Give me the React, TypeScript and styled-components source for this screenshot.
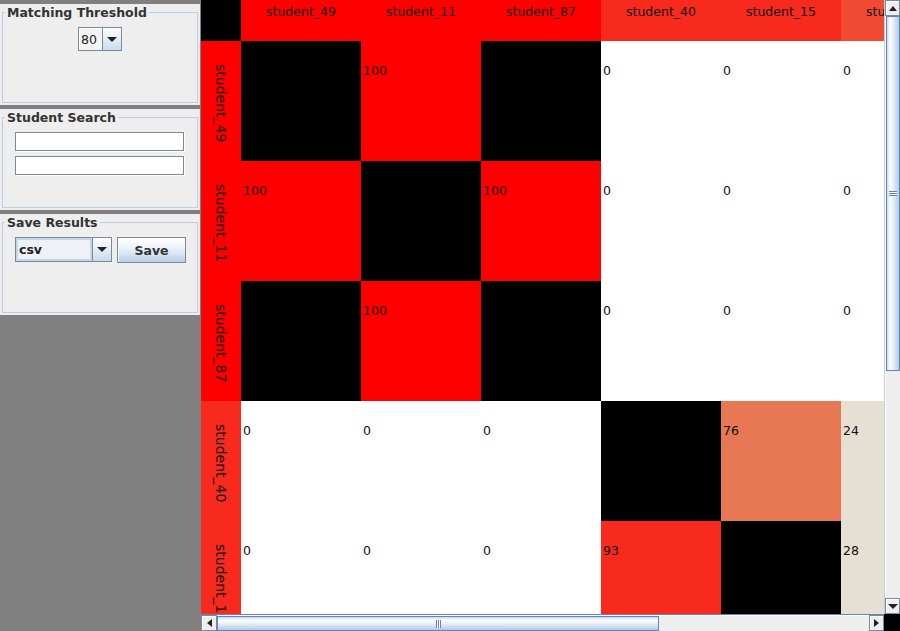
import React from "react";
import styled, { createGlobalStyle } from "styled-components";

const Global = createGlobalStyle`
  html, body { margin: 0; padding: 0; background: #808080; }
  * { box-sizing: border-box; }
`;

const FONT = `"DejaVu Sans", Verdana, sans-serif`;

const students = [
  "student_49",
  "student_11",
  "student_87",
  "student_40",
  "student_15",
  "student_22",
  "student_63",
  "student_08",
];

const matrix: (number | null)[][] = [
  [null, 100, null, 0, 0, 0, 0, 0],
  [100, null, 100, 0, 0, 0, 0, 0],
  [null, 100, null, 0, 0, 0, 0, 0],
  [0, 0, 0, null, 76, 24, 0, 0],
  [0, 0, 0, 93, null, 28, 0, 0],
  [0, 0, 0, 31, 22, null, 88, 0],
  [0, 0, 0, 0, 0, 85, null, 12],
  [0, 0, 0, 0, 0, 0, 9, null],
];

const headerColors = ["#ff0000", "#ff0000", "#ff0000", "#f8291d", "#f8291d", "#f04a33", "#f04a33", "#e5e0d3"];

const cellColor = (v: number | null) => {
  if (v === null) return "#000000";
  if (v >= 100) return "#ff0000";
  if (v >= 90) return "#f8291d";
  if (v >= 80) return "#f04a33";
  if (v >= 60) return "#e87854";
  if (v >= 20) return "#e5e0d3";
  return "#ffffff";
};

/* ---------- layout ---------- */

const Window = styled.div`
  width: 900px;
  height: 631px;
  display: flex;
  gap: 1px;
  background: #808080;
  overflow: hidden;
  font-family: ${FONT};
`;

const Sidebar = styled.aside`
  width: 200px;
  flex: none;
  display: flex;
  flex-direction: column;
  gap: 4px;
  padding-top: 4px;
`;

const Panel = styled.section`
  height: 101px;
  background: #eeeeee;
  padding: 1px 2px 2px 2px;
  display: flex;
`;

const Group = styled.fieldset`
  flex: 1;
  min-width: 0;
  margin: 0;
  padding: 0;
  border: 1px solid #b8cfe5;
  display: flex;
  flex-direction: column;
`;

const Legend = styled.legend`
  margin-left: 2px;
  padding: 0 2px;
  font: bold 12.5px/15px ${FONT};
  color: #333333;
`;

const Content = styled.div<{ $center?: boolean }>`
  display: flex;
  flex-direction: column;
  align-items: ${(p) => (p.$center ? "center" : "flex-start")};
  padding: 7px 0 0 ${(p) => (p.$center ? 0 : 12)}px;
  gap: 5px;
`;

const Row = styled.div`
  display: flex;
  align-items: flex-start;
  gap: 5px;
`;

/* ---------- Metal widgets ---------- */

const Combo = styled.div<{ $w: number; $h: number }>`
  width: ${(p) => p.$w}px;
  height: ${(p) => p.$h}px;
  display: flex;
  border: 1px solid #7a8a99;
  background: #eeeeee;
`;

const ComboValue = styled.div<{ $focus?: boolean }>`
  flex: 1;
  display: flex;
  align-items: center;
  padding-left: ${(p) => (p.$focus ? 3 : 2)}px;
  font: ${(p) => (p.$focus ? "bold" : "normal")} 12.5px ${FONT};
  color: #222222;
  background: ${(p) => (p.$focus ? "#eef2f6" : "#f4f4f4")};
  box-shadow: ${(p) => (p.$focus ? "inset 0 0 0 2px #c4d6e8" : "inset 1px 1px 0 #ffffff")};
`;

const ComboArrow = styled.div`
  width: 19px;
  flex: none;
  border-left: 1px solid #7a8a99;
  background: linear-gradient(to bottom, #ffffff 0%, #e6eef6 45%, #c9dbec 100%);
  display: flex;
  align-items: center;
  justify-content: center;
`;

const Triangle = styled.span<{ $dir: "down" | "up" | "left" | "right" }>`
  width: 0;
  height: 0;
  border-style: solid;
  ${(p) =>
    p.$dir === "down"
      ? "border-width: 5px 5px 0 5px; border-color: #222 transparent transparent transparent;"
      : p.$dir === "up"
      ? "border-width: 0 4px 5px 4px; border-color: transparent transparent #222 transparent;"
      : p.$dir === "left"
      ? "border-width: 4px 5px 4px 0; border-color: transparent #222 transparent transparent;"
      : "border-width: 4px 0 4px 5px; border-color: transparent transparent transparent #222;"}
`;

const TextField = styled.input`
  width: 169px;
  height: 19px;
  margin: 0;
  padding: 0 3px;
  border: 1px solid #7a8a99;
  box-shadow: 1px 1px 0 #ffffff;
  background: #ffffff;
  font: 12px ${FONT};
  outline: none;
`;

const Button = styled.button`
  width: 69px;
  height: 26px;
  margin: 0;
  padding: 0;
  border: 1px solid #7a8a99;
  background: linear-gradient(to bottom, #ffffff 0%, #f2f6fa 30%, #dde8f3 60%, #b8cfe5 100%);
  box-shadow: inset 1px 1px 0 #ffffff;
  font: bold 12.5px ${FONT};
  color: #333333;
`;

/* ---------- matrix ---------- */

const Main = styled.main`
  width: 699px;
  height: 631px;
  display: grid;
  grid-template-columns: 683px 16px;
  grid-template-rows: 614px 17px;
`;

const Viewport = styled.div`
  overflow: hidden;
  background: #ffffff;
`;

const Grid = styled.div`
  display: grid;
  grid-template-columns: 40px repeat(8, 120px);
  grid-template-rows: 41px repeat(8, 120px);
  width: max-content;
`;

const Corner = styled.div`
  background: #000000;
`;

const ColHeader = styled.div<{ $bg: string }>`
  background: ${(p) => p.$bg};
  text-align: center;
  padding-top: 5px;
  font: 12.5px/14px ${FONT};
  color: #111111;
  white-space: nowrap;
`;

const RowHeader = styled.div<{ $bg: string }>`
  background: ${(p) => p.$bg};
  display: flex;
  justify-content: center;
  overflow: hidden;
`;

const RowLabel = styled.span`
  writing-mode: vertical-rl;
  margin-top: 23px;
  font: 14px/16px ${FONT};
  color: #111111;
  white-space: nowrap;
`;

const Cell = styled.div<{ $bg: string }>`
  background: ${(p) => p.$bg};
  padding: 23px 0 0 2px;
  font: 12.5px/14px ${FONT};
  color: #111111;
`;

/* ---------- scrollbars ---------- */

const VScroll = styled.div`
  display: grid;
  grid-template-rows: 16px 1fr 16px;
  background: #eeeeee;
  border-left: 1px solid #b8cfe5;
`;

const HScroll = styled.div`
  display: grid;
  grid-template-columns: 16px 1fr 15px;
  background: #eeeeee;
  border-top: 1px solid #6382bf;
`;

const ArrowButton = styled.div`
  background: #eeeeee;
  border: 1px solid #7a8a99;
  box-shadow: inset 1px 1px 0 #ffffff;
  display: flex;
  align-items: center;
  justify-content: center;
`;

const Track = styled.div<{ $vertical?: boolean }>`
  display: flex;
  flex-direction: ${(p) => (p.$vertical ? "column" : "row")};
  background: #eeeeee;
  border-${(p) => (p.$vertical ? "left" : "top")}: 1px solid #ffffff;
`;

const Thumb = styled.div<{ $vertical?: boolean }>`
  flex: none;
  display: flex;
  align-items: center;
  justify-content: center;
  border: 1px solid #6382bf;
  background: ${(p) =>
    p.$vertical
      ? "linear-gradient(to right, #c7d8ea 0%, #ffffff 25%, #e4edf6 55%, #c4d7ea 85%, #b3cbe3 100%)"
      : "linear-gradient(to bottom, #c7d8ea 0%, #ffffff 25%, #e4edf6 55%, #c4d7ea 85%, #b3cbe3 100%)"};
`;

const Grip = styled.span<{ $vertical?: boolean }>`
  display: block;
  ${(p) =>
    p.$vertical
      ? "width: 8px; height: 5px; background: repeating-linear-gradient(to bottom, #6382bf 0 1px, #ffffff 1px 2px);"
      : "width: 5px; height: 8px; background: repeating-linear-gradient(to right, #6382bf 0 1px, #ffffff 1px 2px);"}
`;

const CornerBox = styled.div`
  background: #000000;
`;

export default function App() {
  return (
    <>
      <Global />
      <Window>
        <Sidebar>
          <Panel>
            <Group>
              <Legend>Matching Threshold</Legend>
              <Content $center>
                <Combo $w={44} $h={24}>
                  <ComboValue>80</ComboValue>
                  <ComboArrow>
                    <Triangle $dir="down" />
                  </ComboArrow>
                </Combo>
              </Content>
            </Group>
          </Panel>
          <Panel>
            <Group>
              <Legend>Student Search</Legend>
              <Content>
                <TextField />
                <TextField />
              </Content>
            </Group>
          </Panel>
          <Panel>
            <Group>
              <Legend>Save Results</Legend>
              <Content>
                <Row>
                  <Combo $w={97} $h={25}>
                    <ComboValue $focus>csv</ComboValue>
                    <ComboArrow>
                      <Triangle $dir="down" />
                    </ComboArrow>
                  </Combo>
                  <Button>Save</Button>
                </Row>
              </Content>
            </Group>
          </Panel>
        </Sidebar>
        <Main>
          <Viewport>
            <Grid>
              <Corner />
              {students.map((s, i) => (
                <ColHeader key={s} $bg={headerColors[i]}>
                  {s}
                </ColHeader>
              ))}
              {students.map((s, r) => (
                <React.Fragment key={s}>
                  <RowHeader $bg={headerColors[r]}>
                    <RowLabel>{s}</RowLabel>
                  </RowHeader>
                  {matrix[r].map((v, c) => (
                    <Cell key={c} $bg={cellColor(v)}>
                      {v === null ? "" : v}
                    </Cell>
                  ))}
                </React.Fragment>
              ))}
            </Grid>
          </Viewport>
          <VScroll>
            <ArrowButton>
              <Triangle $dir="up" />
            </ArrowButton>
            <Track $vertical>
              <Thumb $vertical style={{ height: 355 }}>
                <Grip $vertical />
              </Thumb>
            </Track>
            <ArrowButton>
              <Triangle $dir="down" />
            </ArrowButton>
          </VScroll>
          <HScroll>
            <ArrowButton>
              <Triangle $dir="left" />
            </ArrowButton>
            <Track>
              <Thumb style={{ width: 442 }}>
                <Grip />
              </Thumb>
            </Track>
            <ArrowButton>
              <Triangle $dir="right" />
            </ArrowButton>
          </HScroll>
          <CornerBox />
        </Main>
      </Window>
    </>
  );
}
